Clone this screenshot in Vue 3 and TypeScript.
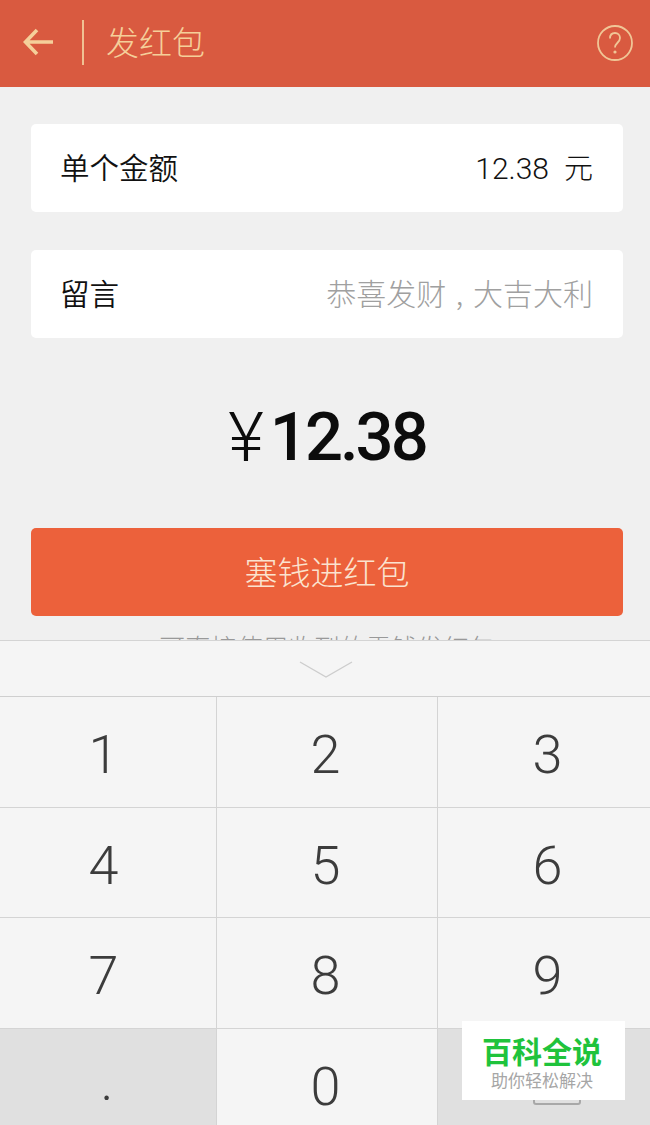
<template>
  <div class="page">
    <header class="bar">
      <svg class="back" width="32" height="32" viewBox="0 0 32 32" fill="none">
        <path d="M15 3 3.5 15 15 27M3.5 15H31" stroke="#f5cf9a" stroke-width="3.6" />
      </svg>
      <span class="divider"></span>
      <h1 class="title">发红包</h1>
      <svg class="help" width="38" height="38" viewBox="0 0 38 38" fill="none">
        <circle cx="19" cy="19" r="17" stroke="#f0c696" stroke-width="1.8" />
        <path d="M14 14.5C14 11 16.2 9 19 9s5 2 5 5c0 4.5-5 5-5 9.5" stroke="#f0c696" stroke-width="1.8" />
        <circle cx="19" cy="28" r="1.6" fill="#f0c696" />
      </svg>
    </header>

    <main class="content">
      <div class="card">
        <span class="label">单个金额</span>
        <span class="value">12.38<i class="unit">元</i></span>
      </div>
      <div class="card card-msg">
        <span class="label">留言</span>
        <span class="placeholder">恭喜发财 , 大吉大利</span>
      </div>
      <div class="amount"><span class="yen">¥</span>12.38</div>
      <button class="submit">塞钱进红包</button>
      <p class="hint">可直接使用收到的零钱发红包</p>
    </main>

    <section class="keyboard">
      <div class="collapse">
        <svg width="54" height="18" viewBox="0 0 54 18" fill="none">
          <path d="M1 1 27 16 53 1" stroke="#cdcdcd" stroke-width="1.4" />
        </svg>
      </div>
      <div class="keys">
        <div v-for="k in keys" :key="k" class="key">{{ k }}</div>
        <div class="key key-dark key-dot">.</div>
        <div class="key">0</div>
        <div class="key key-dark">
          <span class="del"></span>
        </div>
      </div>
    </section>

    <div class="watermark">
      <strong class="wm-title">百科全说</strong>
      <span class="wm-sub">助你轻松解决</span>
    </div>
  </div>
</template>

<script setup lang="ts">
const keys: string[] = ["1", "2", "3", "4", "5", "6", "7", "8", "9"];
</script>

<style>
body { margin: 0; }
</style>

<style scoped>
.page {
  position: relative;
  width: 650px;
  height: 1125px;
  overflow: hidden;
  background: #f0f0f0;
  font-family: "Noto Sans CJK SC", "Noto Sans", sans-serif;
}
.bar {
  display: flex;
  align-items: center;
  height: 87px;
  padding: 0 16px 2px 22px;
  box-sizing: border-box;
  background: #d95a40;
}
.back { flex: none; }
.divider { width: 2px; height: 45px; margin-left: 28px; background: #f0c193; }
.title {
  margin: 0 0 3px 22px;
  font-size: 33px;
  font-weight: 300;
  color: #f5cf9a;
}
.help { margin-left: auto; }
.content {
  display: flex;
  flex-direction: column;
  padding: 37px 27px 0 31px;
}
.card {
  display: flex;
  align-items: center;
  justify-content: space-between;
  height: 88px;
  padding: 0 30px 0 29px;
  border-radius: 5px;
  background: #fff;
}
.card-msg { margin-top: 38px; }
.label { margin-bottom: 4px; font-size: 29.5px; font-weight: 350; color: #111; }
.value {
  margin-bottom: 5px;
  font-family: Roboto, sans-serif;
  font-size: 30px;
  font-weight: 300;
  color: #111;
}
.unit { margin-left: 15px; font-family: "Noto Sans CJK SC", sans-serif; font-size: 29px; font-style: normal; }
.placeholder { margin-bottom: 4px; font-size: 30px; font-weight: 300; word-spacing: 3px; color: #a0a0a0; }
.amount {
  display: flex;
  justify-content: center;
  align-items: center;
  height: 190px;
  padding-top: 8px;
  box-sizing: border-box;
  font-family: Roboto, sans-serif;
  font-size: 67px;
  font-weight: 500;
  letter-spacing: -3px;
  color: #0c0c0c;
}
.yen { font-size: 69px; font-weight: 300; margin-right: 6px; letter-spacing: 0; }
.submit {
  height: 88px;
  padding-bottom: 3px;
  border: 0;
  border-radius: 5px;
  background: #ec613b;
  color: #fbe3cf;
  font-family: inherit;
  font-size: 33px;
  font-weight: 300;
}
.hint {
  margin: 12px 0 0;
  text-align: center;
  font-size: 25.8px;
  font-weight: 300;
  color: #999;
}
.keyboard {
  position: absolute;
  left: 0;
  right: 0;
  top: 640px;
  display: flex;
  flex-direction: column;
  background: #f5f5f5;
  border-top: 1px solid #d4d4d4;
}
.collapse {
  display: flex;
  justify-content: center;
  align-items: center;
  height: 55px;
  padding: 2px 0 0 2px;
  box-sizing: border-box;
}
.keys {
  display: grid;
  grid-template-columns: 217px 221px 212px;
  grid-template-rows: 111px 110px 111px 111px;
  border-top: 1px solid #cfcfcf;
}
.key {
  display: flex;
  align-items: center;
  justify-content: center;
  box-sizing: border-box;
  padding: 5px 3px 0 0;
  border-right: 1px solid #d4d4d4;
  border-bottom: 1px solid #d4d4d4;
  font-family: Roboto, sans-serif;
  font-size: 54px;
  font-weight: 300;
  color: #3c3c3c;
}
.key:nth-child(3n + 1) { padding-right: 9px; }
.key:nth-child(3n) { padding-left: 7px; padding-right: 0; border-right: 0; }
.key-dark { background: #e0e0e0; }
.key.key-dot { align-items: flex-end; padding: 0 2px 26px 0; }
.del {
  width: 48px;
  height: 30px;
  margin: 6px 0 0 19px;
  box-sizing: border-box;
  border: 2px solid #a8a8a8;
  border-radius: 3px;
}
.watermark {
  position: absolute;
  left: 462px;
  top: 1021px;
  display: flex;
  flex-direction: column;
  align-items: center;
  box-sizing: border-box;
  width: 163px;
  height: 79px;
  padding-right: 3px;
  background: #fff;
}
.wm-title {
  margin-top: 13px;
  font-size: 30px;
  line-height: 32px;
  font-weight: 700;
  color: #1fc33c;
}
.wm-sub {
  margin-top: 3px;
  font-size: 17px;
  line-height: 22px;
  color: #a6a6a6;
}
</style>
